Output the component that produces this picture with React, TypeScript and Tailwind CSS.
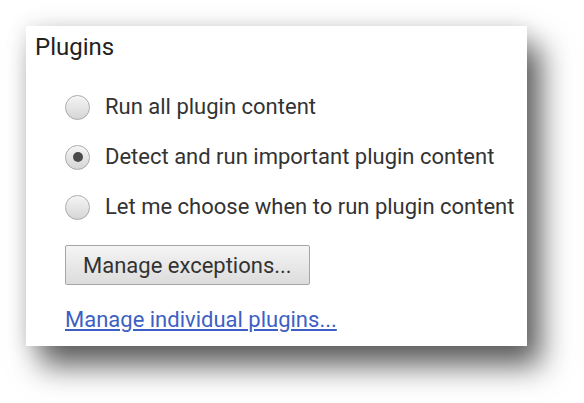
import React, { useState } from "react";

const options = [
    "Run all plugin content",
    "Detect and run important plugin content",
    "Let me choose when to run plugin content",
];

function Radio({ checked }: { checked: boolean }) {
    return (
        <span className="flex h-[25px] w-[25px] shrink-0 items-center justify-center rounded-full border border-[#a9a9a9] bg-gradient-to-b from-[#f4f4f4] to-[#d6d6d6] shadow-[inset_0_1px_1px_rgba(255,255,255,0.8)]">
            {checked && <span className="h-[10px] w-[10px] rounded-full bg-[#4a4a4a]" />}
        </span>
    );
}

export default function App() {
    const [selected, setSelected] = useState(1);

    return (
        <div className="h-[403px] w-[584px] overflow-hidden bg-white pl-[26px] pt-[26px] font-['Roboto',sans-serif] text-[#333]">
            <div className="h-[320px] w-[501px] bg-white shadow-[14px_20px_28px_rgba(0,0,0,0.62),0_0_20px_rgba(0,0,0,0.12)]">
                <h2 className="pl-[9px] pt-[7px] text-[24px] leading-[28px] font-normal text-[#222]">
                    Plugins
                </h2>
                <div className="mt-[34px] flex flex-col gap-[26px] pl-[39px]">
                    {options.map((label, i) => (
                        <label
                            key={label}
                            className="flex h-[24px] cursor-pointer items-center gap-[15px]"
                            onClick={() => setSelected(i)}
                        >
                            <Radio checked={selected === i} />
                            <span className="text-[22px] leading-[26px]">{label}</span>
                        </label>
                    ))}
                </div>
                <button className="ml-[39px] mt-[26px] h-[40px] w-[245px] rounded-[2px] border border-[#a6a6a6] bg-gradient-to-b from-[#f5f5f5] to-[#dcdcdc] pl-[17px] text-left text-[22px] text-[#333]">
                    Manage exceptions...
                </button>
                <div className="pl-[39px] pt-[22px]">
                    <a href="#" className="text-[22px] leading-[26px] text-[#3d5fc4] underline">
                        Manage individual plugins...
                    </a>
                </div>
            </div>
        </div>
    );
}
